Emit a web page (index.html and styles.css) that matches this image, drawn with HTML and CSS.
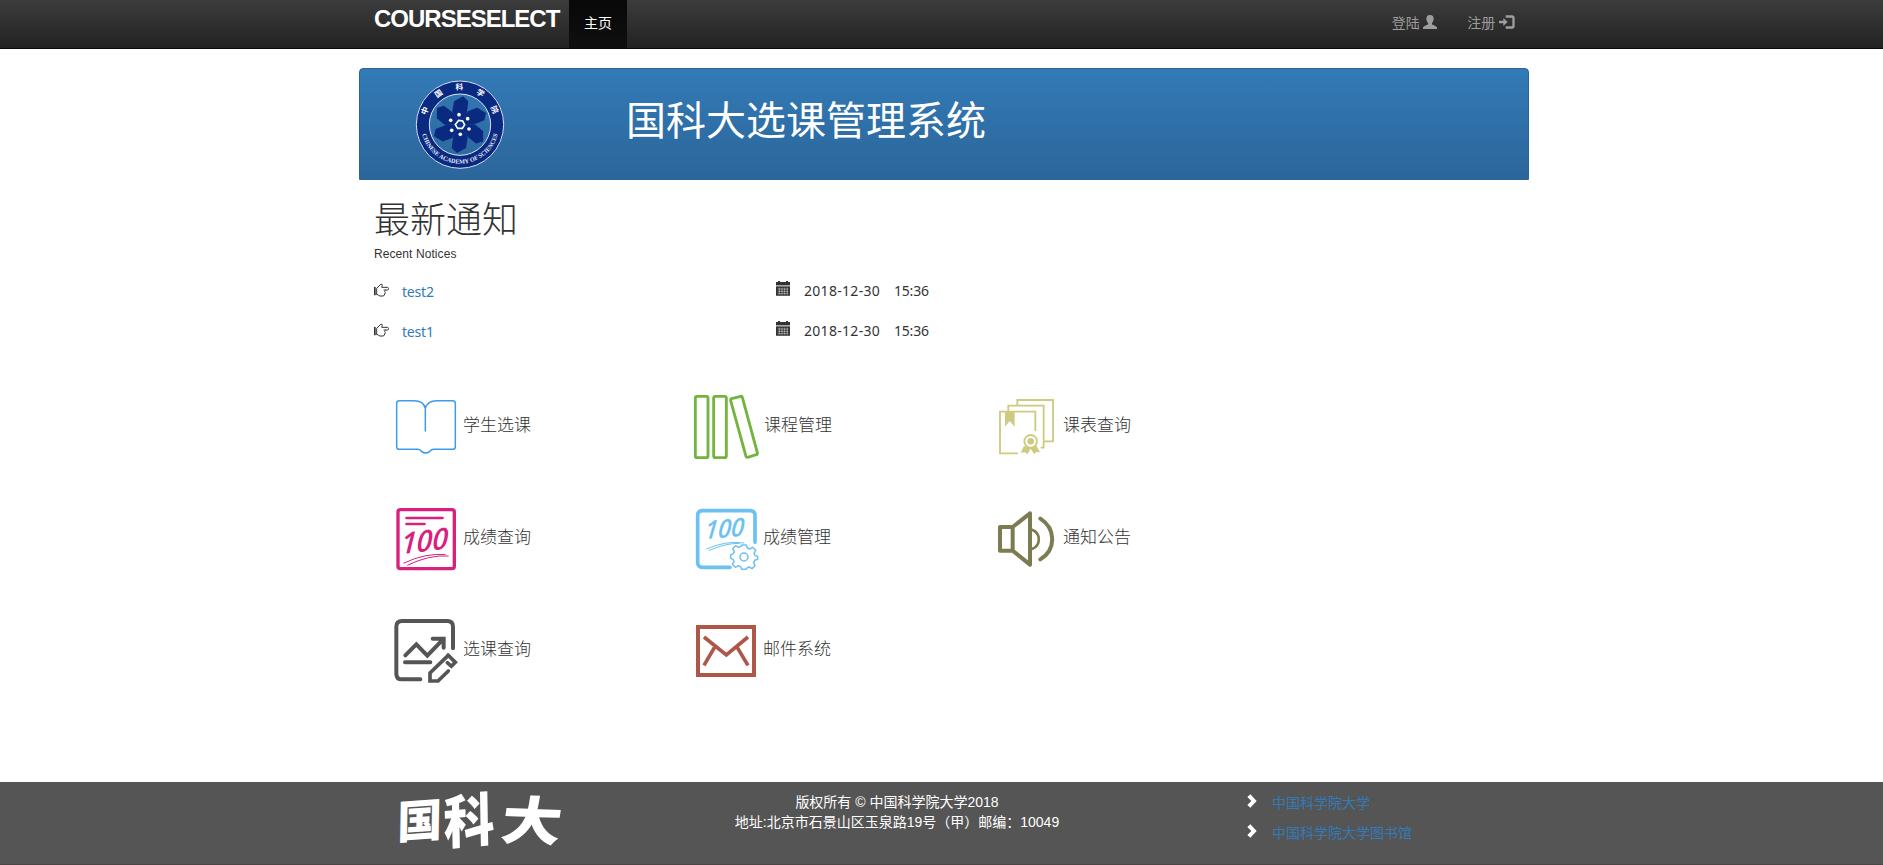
FILE: index.html
```html
<!DOCTYPE html>
<html lang="zh-CN">
<head>
<meta charset="utf-8">
<title>CourseSelect</title>
<link rel="stylesheet" href="styles.css">
</head>
<body>
<header class="navbar">
  <div class="container nav-inner">
    <a class="brand">CourseSelect</a>
    <a class="nav-link active">主页</a>
    <nav class="nav-right">
      <a class="nav-link">登陆 <svg class="glyph" width="14" height="14" viewBox="0 0 42 42"><path d="M21 0c8 0 11 5 11 11 0 7-3 9-5 13v4c4 4 15 5 15 11v3H0v-3c0-6 11-7 15-11v-4c-2-4-5-6-5-13C10 5 13 0 21 0z"/></svg></a>
      <a class="nav-link">注册 <svg class="glyph" width="16" height="14" viewBox="0 0 48 42"><path d="M0 17h13V9l13 12-13 12v-8H0zM20 1h19q8 0 8 8v24q0 8-8 8H20v-7h17q3 0 3-3V11q0-3-3-3H20z"/></svg></a>
    </nav>
  </div>
</header>

<main class="container">
  <section class="banner">
    <svg class="seal" width="90" height="90" viewBox="45 27 270 270">
      <defs>
        <path id="seal-top" d="M75 164a105 105 0 0 1 210 0"/>
        <path id="seal-bottom" d="M63 164a117 117 0 0 0 234 0"/>
        <polygon id="petal" points="180,164 157,124 162,94 189,79 205,94 200,130"/>
      </defs>
      <circle cx="180" cy="164" r="112" fill="none" stroke="#0a2a82" stroke-width="40"/>
      <circle cx="180" cy="164" r="131" fill="none" stroke="#dde4f4" stroke-width="3"/>
      <circle cx="180" cy="164" r="92" fill="none" stroke="#dde4f4" stroke-width="3"/>
      <g fill="#0a2a82">
        <use href="#petal"/><use href="#petal" transform="rotate(60 180 164)"/><use href="#petal" transform="rotate(120 180 164)"/><use href="#petal" transform="rotate(180 180 164)"/><use href="#petal" transform="rotate(240 180 164)"/><use href="#petal" transform="rotate(300 180 164)"/>
      </g>
      <polygon points="176,151 188,153 194,164 187,175 173,175 166,164" fill="none" stroke="#fff" stroke-width="5"/>
      <g fill="#fff"><circle cx="177" cy="134" r="5.5"/><circle cx="203" cy="146" r="5.5"/><circle cx="207" cy="177" r="5.5"/><circle cx="181" cy="193" r="5.5"/><circle cx="155" cy="181" r="5.5"/><circle cx="152" cy="151" r="5.5"/></g>
      <text class="seal-cn" textLength="270"><textPath href="#seal-top" startOffset="28" textLength="270">中国科学院</textPath></text>
      <text class="seal-en"><textPath href="#seal-bottom" startOffset="50%" text-anchor="middle">CHINESE ACADEMY OF SCIENCES</textPath></text>
    </svg>
    <h1 class="banner-title">国科大选课管理系统</h1>
  </section>

  <section class="notices">
    <h2 class="notices-title">最新通知</h2>
    <p class="notices-sub">Recent Notices</p>
    <div class="notice">
      <svg class="hand" width="15" height="14" viewBox="0 0 45 42"><path d="M8 16l12-12q5-2 5 3l-2 6h17q4 1 4 4t-4 4H29M8 16v19h4q2 4 6 4h9q5-1 5-6l2-4-2-3 2-4" fill="none" stroke="#333" stroke-width="3"/><path d="M0 12h5v25H0z"/></svg>
      <a class="notice-link">test2</a>
      <svg class="cal" width="14" height="15" viewBox="0 0 42 45"><use href="#calendar"/></svg>
      <span class="date">2018-12-30</span><span class="time">15:36</span>
    </div>
    <div class="notice">
      <svg class="hand" width="15" height="14" viewBox="0 0 45 42"><path d="M8 16l12-12q5-2 5 3l-2 6h17q4 1 4 4t-4 4H29M8 16v19h4q2 4 6 4h9q5-1 5-6l2-4-2-3 2-4" fill="none" stroke="#333" stroke-width="3"/><path d="M0 12h5v25H0z"/></svg>
      <a class="notice-link">test1</a>
      <svg class="cal" width="14" height="15" viewBox="0 0 42 45"><defs><g id="calendar"><path d="M0 3h6V0h6v3h18V0h6v3h6v9H0zM0 16h42v28H0z"/><path d="M5 24h32M5 31h32M5 38h32M10 20v21M18 20v21M26 20v21M34 20v21" stroke="#fff" stroke-width="1.3"/><path d="M0 14h42" stroke="#aaa" stroke-width="4"/></g></defs><use href="#calendar"/></svg>
      <span class="date">2018-12-30</span><span class="time">15:36</span>
    </div>
  </section>

  <section class="tiles">
    <a class="tile">
      <svg class="tile-icon" viewBox="30 30 210 210" fill="none" stroke="#3d9be9" stroke-width="4.5" stroke-linecap="round"><path d="M136 153V85q-5-23-34-23H58q-8 0-8 8v130q0 8 8 8h54q10 0 12 6 13 10 26 0 3-6 12-6h56q8 0 8-8V70q0-8-8-8h-48q-27 0-34 23"/></svg>
      <span>学生选课</span>
    </a>
    <a class="tile">
      <svg class="tile-icon" viewBox="30 30 210 210" fill="none" stroke="#72b43e" stroke-width="8.5"><rect x="46" y="49" width="38" height="184" rx="5"/><rect x="101" y="49" width="38" height="184" rx="5"/><path d="M155 56l27-7q4-1 5 3l45 166q1 5-3 6l-26 8q-4 1-5-3L152 62q-1-5 3-6z"/></svg>
      <span class="nudge">课程管理</span>
    </a>
    <a class="tile">
      <svg class="tile-icon" viewBox="30 30 210 210" fill="none" stroke="#cdcb80" stroke-width="5.5"><path d="M166 153V95H60v125h54M85 92V77h106v126h-9M112 74V60h107v124h-27"/><path d="M75 95h29v45l-15-17-14 17z" fill="#cdcb80" stroke="none"/><circle cx="152" cy="184" r="19"/><circle cx="152" cy="184" r="10" fill="#cdcb80" stroke="none"/><path d="M132 198l-10 20 13-1 7 6 10-17 11 17 5-7 12 1-11-20q-17 12-37 1z" fill="#cdcb80" stroke="none"/></svg>
      <span>课表查询</span>
    </a>
    <a class="tile">
      <svg class="tile-icon" viewBox="30 36 210 210" fill="none" stroke="#d8217e" stroke-width="10"><rect x="54" y="59" width="169" height="177" rx="7"/><path d="M79 84h109M79 102h55" stroke-width="7" stroke-linecap="round"/><path d="M70 220q67-32 127-26M82 226q65-32 124-28" stroke-width="3"/><text class="hundred" transform="translate(62 193) rotate(-7) skewX(-10)" textLength="142" lengthAdjust="spacingAndGlyphs" font-size="88" fill="#d8217e" stroke="none">100</text></svg>
      <span>成绩查询</span>
    </a>
    <a class="tile">
      <svg class="tile-icon" viewBox="30 366 210 210" fill="none" stroke="#6bc1f2" stroke-width="11" stroke-linecap="round"><path d="M225 487v-80q0-15-15-15H68q-15 0-15 15v140q0 15 15 15h82"/><path d="M80 507q56-26 112-18M88 511q50-22 90-21" stroke-width="3"/><text class="hundred" transform="translate(73 478) rotate(-5) skewX(-10)" textLength="118" lengthAdjust="spacingAndGlyphs" font-size="76" fill="#6bc1f2" stroke="none">100</text><g stroke-width="4.5" transform="translate(192 531)"><circle r="12"/><path d="M-7-36H7l3 9 7 3 9-5 9 9-5 9 3 6 8 3V7l-9 3-3 7 4 9-9 9-9-5-6 3-3 4H-7l-3-8-7-3-9 5-9-9 5-9-3-6-7-3V-7l8-3 3-6-5-9 9-9 9 5 7-3z" stroke-linejoin="round"/></g></svg>
      <span>成绩管理</span>
    </a>
    <a class="tile">
      <svg class="tile-icon" viewBox="30 366 210 210" fill="none" stroke="#7c7b52" stroke-width="12" stroke-linejoin="round" stroke-linecap="round"><path d="M98 441H60v71h38l52 42V400zM98 441v71M181 416c47 30 48 92 0 122" /><path d="M158 450c25 11 24 46 0 56" stroke-width="8"/></svg>
      <span>通知公告</span>
    </a>
    <a class="tile">
      <svg class="tile-icon" viewBox="30 372 210 210" fill="none" stroke="#555" stroke-width="12" stroke-linecap="round"><path d="M219 475v-65q0-17-17-17H66q-17 0-17 17v141q0 17 17 17h55M76 496l33-33 33 34 47-49M75 517h76M158 446h33v27"/><path d="M204 497l-54 52v24h24l31-30M204 495l22 22-12 12-12-11" stroke-width="11"/></svg>
      <span>选课查询</span>
    </a>
    <a class="tile">
      <svg class="tile-icon" viewBox="30 702 210 210" fill="none" stroke="#ae5748" stroke-width="12"><path d="M54 741h168v144H54z"/><path d="M72 771l67 54 65-54M72 856l31-53M204 856l-32-53" stroke-width="11"/></svg>
      <span>邮件系统</span>
    </a>
  </section>
</main>

<footer class="footer">
  <div class="container footer-inner">
    <svg class="wordmark" width="180" height="82" viewBox="-10 0 180 82" fill="#fff">
      <text transform="translate(1 57) rotate(-4) skewX(-5)" font-size="45">国</text>
      <text transform="translate(48 62) rotate(-5) skewX(-4) scale(1 1.12)" font-size="51">科</text>
      <text transform="translate(103 57) rotate(2) skewX(-6) scale(1.1 .95)" font-size="55">大</text>
    </svg>
    <div class="copyright">版权所有 © 中国科学院大学2018<br>地址:北京市石景山区玉泉路19号（甲）邮编：10049</div>
    <ul class="links">
      <li><svg class="chevron" viewBox="0 0 30 42"><path d="M1 9l9-8 19 20-19 20-9-8 12-12z"/></svg><a>中国科学院大学</a></li>
      <li><svg class="chevron" viewBox="0 0 30 42"><path d="M1 9l9-8 19 20-19 20-9-8 12-12z"/></svg><a>中国科学院大学图书馆</a></li>
    </ul>
  </div>
</footer>
</body>
</html>
```
FILE: styles.css
```css
* { box-sizing: border-box; }
body {
  margin: 0;
  height: 865px;
  display: flex;
  flex-direction: column;
  overflow: hidden;
  background: #fff;
  color: #333;
  font: 14px/20px "Noto Sans", "Noto Sans CJK SC", sans-serif;
}
h1, h2, p, ul { margin: 0; padding: 0; font-weight: 400; }
.container { width: 1170px; margin-left: 359px; }

.navbar {
  height: 49px;
  background: linear-gradient(#3c3c3c, #222);
  border-bottom: 1px solid #080808;
}
.nav-inner { display: flex; height: 48px; padding: 0 0 0 15px; }
.brand {
  width: 195px;
  font: bold 24px/37px "Liberation Sans", Arial, sans-serif;
  letter-spacing: -1px;
  text-transform: uppercase;
  color: #fff;
}
.nav-link {
  height: 48px;
  padding: 0 15px;
  line-height: 46px;
  color: #9d9d9d;
  white-space: nowrap;
}
.nav-link.active { width: 58px; color: #fff; background: linear-gradient(#080808, #0f0f0f); }
.nav-right { display: flex; margin: 0 -1px 0 auto; }
.glyph { fill: #9d9d9d; vertical-align: -1px; }

.banner {
  display: flex;
  height: 112px;
  margin-top: 19px;
  padding-left: 55px;
  border: 1px solid #2b669a;
  border-radius: 4px 4px 0 0;
  background: linear-gradient(#337ab7, #2b669a);
}
.seal { margin-top: 10px; }
.seal-cn { font: bold 23px "Noto Sans CJK SC", sans-serif; fill: #fff; }
.seal-en { font: bold 18.5px "Liberation Serif", serif; fill: #e8edf8; }
.banner-title {
  margin-left: 121px;
  font-size: 40px;
  line-height: 102px;
  color: #fff;
}

.notices { padding: 17px 15px 0; }
.notices-title { font-size: 36px; font-weight: 300; line-height: 46px; }
.notices-sub { margin-top: 1px; font: 12px/20px "Liberation Sans", Arial, sans-serif; letter-spacing: .08px; }
.notice { display: flex; height: 40px; padding-top: 16px; }
.notices-sub + .notice { margin-top: 1px; }
.hand, .cal { flex: none; fill: #333; }
.hand { margin-top: 2px; }
.cal { margin-top: 0; }
.notice-link { width: 374px; margin-left: 13px; line-height: 21px; letter-spacing: -.2px; color: #337ab7; }
.date { width: 90px; margin-left: 14px; letter-spacing: .3px; }
.time { letter-spacing: -.2px; }

.tiles {
  display: grid;
  grid-template-columns: repeat(3, 300px);
  grid-auto-rows: 112px;
  padding: 45px 0 0 31px;
}
.tile { display: flex; height: 70px; gap: 3px; font-size: 17px; font-weight: 300; line-height: 70px; color: #333; }
.tile-icon { width: 70px; height: 70px; }
.nudge { margin-left: 1px; }
.hundred { font-family: "Open Sans", sans-serif; font-style: italic; font-weight: 600; }

.footer { height: 83px; margin-top: auto; background: #555; border-bottom: 1px solid #4b4748; }
.footer-inner { display: flex; padding-left: 27px; }
.wordmark { flex: none; font-family: "Noto Sans CJK SC", sans-serif; font-weight: 900; }
.copyright {
  width: 380px;
  margin: 10px 0 0 141px;
  font-family: "Liberation Sans", "Noto Sans CJK SC", sans-serif;
  color: #fff;
  text-align: center;
  white-space: nowrap;
}
.links { margin: 11px 0 0 160px; list-style: none; color: #337ab7; }
.links li { display: flex; height: 30px; gap: 15px; }
.chevron { width: 10px; height: 14px; margin-top: 1px; fill: #fff; }
```
